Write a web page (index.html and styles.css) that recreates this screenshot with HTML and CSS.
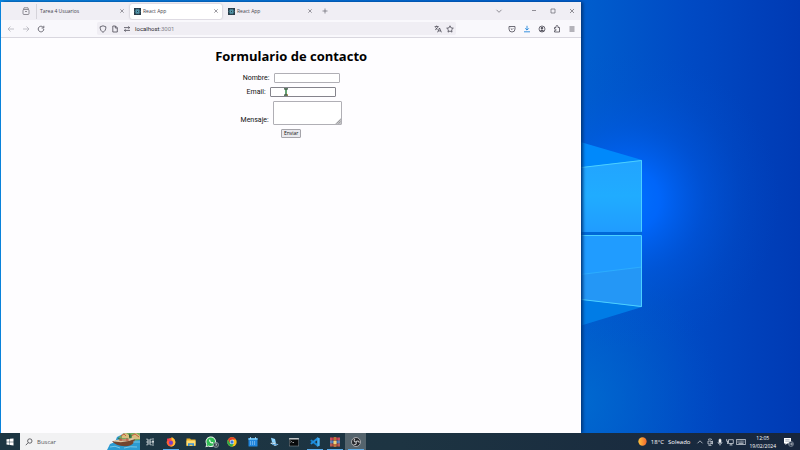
FILE: index.html
```html
<!DOCTYPE html>
<html lang="es">
<head>
<meta charset="utf-8">
<meta name="viewport" content="width=device-width, initial-scale=1">
<title>React App</title>
<link rel="stylesheet" href="styles.css">
</head>
<body>
<div class="desktop">
  <svg class="wallpaper" viewBox="0 0 800 450" preserveAspectRatio="none" aria-hidden="true">
    <defs>
      <linearGradient id="base" x1="0" x2="1" y1="0" y2="0">
        <stop offset="0" stop-color="#0a86e0"/><stop offset=".72" stop-color="#005fce"/><stop offset=".86" stop-color="#004ac4"/><stop offset="1" stop-color="#003ab4"/>
      </linearGradient>
      <radialGradient id="glow" cx="630" cy="200" r="150" gradientUnits="userSpaceOnUse">
        <stop offset="0" stop-color="#0070ff"/><stop offset=".2" stop-color="#0068ff" stop-opacity=".9"/><stop offset=".5" stop-color="#005ae6" stop-opacity=".45"/><stop offset=".75" stop-color="#0055d8" stop-opacity=".15"/><stop offset="1" stop-color="#0050d0" stop-opacity="0"/>
      </radialGradient>
      <radialGradient id="floor" cx="580" cy="400" r="140" gradientUnits="userSpaceOnUse">
        <stop offset="0" stop-color="#006cd0" stop-opacity=".8"/><stop offset="1" stop-color="#0058c8" stop-opacity="0"/>
      </radialGradient>
      <linearGradient id="pane" x1="0" x2="0" y1="0" y2="1">
        <stop offset="0" stop-color="#22a4ff"/><stop offset=".5" stop-color="#20acff"/><stop offset="1" stop-color="#209cff"/>
      </linearGradient>
    </defs>
    <rect width="800" height="450" fill="url(#base)"/>
    <rect width="800" height="450" fill="url(#floor)"/>
    <rect width="800" height="450" fill="url(#glow)"/>
    <path d="M560 136 642 160 560 171z" fill="#0089fb"/>
    <path d="M560 297 642 307 560 332z" fill="#007ce6"/>
    <path d="M560 170 642 160V232H560z" fill="url(#pane)"/>
    <path d="M560 235H642V307L560 297z" fill="#209cff"/>
    <path d="M560 277 642 267V307L560 297z" fill="#2497f6"/>
    <path d="M560 277 642 267" stroke="#31b5ff" stroke-width=".7"/>
    <path d="M560 232H642V235H560z" fill="#0068d8"/>
    <path d="M560 170 641.5 160.5V231.5M641.5 235.500V306.500L560 297M560 235.500H641" fill="none" stroke="#4bd0ff"/>
  </svg>

  <main class="window">
    <div class="tabbar">
      <button class="view icon-btn" aria-label="Firefox View"><svg viewBox="0 0 8 8"><rect x="1" y="2.500" width="6" height="5" rx="1"/><path d="M1.500 2.500 2 .8H6L6.500 2.500M3 4.500H5"/></svg></button>
      <div class="tab first"><span class="title">Tarea 4 Usuarios</span><button class="close" aria-label="Cerrar pestaña"><svg viewBox="0 0 4 4"><path d="M.3.3 3.700 3.700M3.700.3.3 3.700"/></svg></button></div>
      <div class="tab active"><svg class="favicon" viewBox="0 0 7 7"><rect width="7" height="7"/><ellipse cx="3.500" cy="3.500" rx="2.600" ry="1"/><ellipse cx="3.500" cy="3.500" rx="2.600" ry="1" transform="rotate(60 3.5 3.5)"/><ellipse cx="3.500" cy="3.500" rx="2.600" ry="1" transform="rotate(120 3.5 3.5)"/></svg><span class="title">React App</span><button class="close" aria-label="Cerrar pestaña"><svg viewBox="0 0 4 4"><path d="M.3.3 3.700 3.700M3.700.3.3 3.700"/></svg></button></div>
      <div class="tab"><svg class="favicon" viewBox="0 0 7 7"><rect width="7" height="7"/><ellipse cx="3.500" cy="3.500" rx="2.600" ry="1"/><ellipse cx="3.500" cy="3.500" rx="2.600" ry="1" transform="rotate(60 3.5 3.5)"/><ellipse cx="3.500" cy="3.500" rx="2.600" ry="1" transform="rotate(120 3.5 3.5)"/></svg><span class="title">React App</span><button class="close" aria-label="Cerrar pestaña"><svg viewBox="0 0 4 4"><path d="M.3.3 3.700 3.700M3.700.3.3 3.700"/></svg></button></div>
      <button class="icon-btn" aria-label="Nueva pestaña"><svg viewBox="0 0 8 8"><path d="M4 1.500V6.500M1.500 4H6.500"/></svg></button>
      <div class="window-buttons">
        <button class="icon-btn list" aria-label="Listar pestañas"><svg viewBox="0 0 8 8"><path d="M1.500 2.800 4 5.300 6.500 2.800"/></svg></button>
        <button class="icon-btn" aria-label="Minimizar"><svg viewBox="0 0 8 8"><path d="M2 3.500H6"/></svg></button>
        <button class="icon-btn" aria-label="Maximizar"><svg viewBox="0 0 8 8"><path d="M2 2H6V6H2z"/></svg></button>
        <button class="icon-btn" aria-label="Cerrar"><svg viewBox="0 0 8 8"><path d="M2 2 6 6M6 2 2 6"/></svg></button>
      </div>
    </div>

    <div class="toolbar">
      <div class="nav">
        <button class="icon-btn" aria-label="Atrás" disabled><svg viewBox="0 0 8 8"><path d="M7 4H1M3.500 1.500 1 4 3.500 6.500"/></svg></button>
        <button class="icon-btn" aria-label="Adelante" disabled><svg viewBox="0 0 8 8"><path d="M1 4H7M4.500 1.500 7 4 4.500 6.500"/></svg></button>
        <button class="icon-btn" aria-label="Recargar"><svg viewBox="0 0 8 8"><path d="M6.800 4A2.800 2.800 0 1 1 5.800 1.900M6.800.8V3H4.600"/></svg></button>
      </div>
      <div class="urlbar">
        <svg viewBox="0 0 8 8"><path d="M4 .8 6.900 1.800C6.900 4.800 5.800 6.300 4 7.300 2.200 6.300 1.100 4.800 1.100 1.800z"/></svg>
        <svg viewBox="0 0 8 8"><path d="M1.800 1H4.500L6.300 2.800V7H1.800zM4.300 1V3H6.300"/></svg>
        <svg viewBox="0 0 8 8"><path d="M1 2.600H6.500M5.300 1.400 6.700 2.600 5.300 3.800M7 5.400H1.500M2.700 4.200 1.300 5.400 2.700 6.600"/></svg>
        <span class="url">localhost<span class="port">:3001</span></span>
        <svg viewBox="0 0 8 8"><path d="M.6 1.600H4.600M2.600.6V1.600M1.200 4.800C2.800 4 3.600 3 3.800 1.600M1.300 2.500 3.500 4.500M3.600 7.300 5.500 3 7.400 7.300M4.200 5.900H6.800"/></svg>
        <svg viewBox="0 0 8 8"><path d="M4 .8 5 2.900 7.300 3.200 5.600 4.800 6 7.100 4 6 2 7.100 2.400 4.800.7 3.200 3 2.900z"/></svg>
      </div>
      <div class="actions">
        <button class="icon-btn" aria-label="Pocket"><svg viewBox="0 0 8 8"><path d="M1 1.500H7V4A3 3 0 0 1 1 4zM2.700 3.300 4 4.600 5.300 3.300"/></svg></button>
        <button class="icon-btn download" aria-label="Descargas"><svg viewBox="0 0 8 8"><path d="M4 .8V5M2.200 3.300 4 5.100 5.800 3.300M1 6.800H7"/></svg></button>
        <button class="icon-btn" aria-label="Cuenta"><svg viewBox="0 0 8 8"><circle cx="4" cy="4" r="3"/><path d="M4 2.300A.9.9 0 1 1 3.900 2.300M2.300 6Q4 4.300 5.700 6z" fill="#4b4a55"/></svg></button>
        <button class="icon-btn" aria-label="Extensiones"><svg viewBox="0 0 8 8"><path d="M1.500 2.500H3V1.500A1 1 0 0 1 5 1.500V2.500H6.500V7H1.500V5.700H2.300A.8.800 0 0 0 2.300 4.100H1.500z"/></svg></button>
        <button class="icon-btn" aria-label="Menú"><svg viewBox="0 0 8 8"><path d="M1.500 2H6.500M1.500 4H6.500M1.500 6H6.500"/></svg></button>
      </div>
    </div>

    <form class="page">
      <h1>Formulario de contacto</h1>
      <div class="row"><label for="nombre">Nombre:</label><input id="nombre" type="text"></div>
      <div class="row"><label for="email">Email:</label><span class="field"><input class="hovered" id="email" type="email"><svg class="cursor" viewBox="0 0 6 8"><path d="M1 .8H5M3 .8V7.200M1 7.200H5" fill="none" stroke="#284b32" stroke-width="1.300"/><path d="M3 2V5.500" stroke="#58c36b"/><path d="M4 6.800H5" stroke="#e0a040"/></svg></span></div>
      <div class="row message"><label for="mensaje">Mensaje:</label><span class="field"><textarea id="mensaje"></textarea><svg class="grip" viewBox="0 0 6 6"><path d="M6 0V6H0z" fill="#c4c4c6"/><path d="M1.500 5.500 5.500 1.500M3.500 5.500 5.500 3.500" stroke="#858588" stroke-width=".6"/></svg></span></div>
      <button class="send" type="button">Enviar</button>
    </form>
  </main>
</div>

<footer class="taskbar">
  <button class="start" aria-label="Inicio"><svg viewBox="0 0 8 8"><path d="M.5 1.300 3.600.9V3.700H.5zM4 .8 7.500.4V3.700H4zM.5 4.200H3.600V7L.5 6.600zM4 4.200H7.500V7.500L4 7.100z" fill="#fff"/></svg></button>
  <div class="search">
    <svg class="lens" viewBox="0 0 8 8"><circle cx="4.800" cy="3" r="2.200"/><path d="M3.200 4.700.8 7.200"/></svg>
    <input type="text" aria-label="Buscar" placeholder="Buscar">
    <svg class="boat" viewBox="0 0 33 17"><path d="M10 4 14 2 17 0H33V17H0L3 11 8 9z" fill="#2c9bd2"/><path d="M12 4 18 0H33V7L24 8 13 7z" fill="#76a961"/><path d="M15 1 19 0 22 2V5H15zM25 2 29 0 33 3V6H25z" fill="#d9bd7e"/><path d="M14 3 17 1 19 3M24 3 28 1 32 4" fill="none" stroke="#c2603e"/><path d="M22 1 24 3 23 6M11 5 14 7" stroke="#397a4c" stroke-width="1.500"/><path d="M5 8Q15 10 28 6 27 12 21 13 9 14 5 8z" fill="#74452f"/><path d="M6 8Q16 11 28 6L26 5 9 7z" fill="#dfc6a0"/><path d="M12 7H22M14 5V8M20 5V8" stroke="#b05541"/><path d="M3 14Q8 12 13 15M17 15Q23 13 30 14M26 9H33" stroke="#8bd3ec" fill="none" stroke-width=".8"/></svg>
  </div>
  <nav class="apps" aria-label="Aplicaciones">
    <button aria-label="Vista de tareas"><svg viewBox="0 0 10 10"><path d="M2 1.500V3H6V1.500M2 8.500V7H6V8.500M2 4.200H6V5.800H2zM8 1V9" fill="none" stroke="#dbe2e5" stroke-width=".8"/><path d="M7.300 4H8.700V5.500H7.300z" fill="#fff"/></svg></button>
    <button class="open" aria-label="Firefox"><svg viewBox="0 0 10 10"><circle cx="5" cy="5.300" r="4.300" fill="#ff6235"/><path d="M5.500 0C8 1 10 3.500 9.200 6.500 8.500 9 6 9.800 4.200 9.200 8 8.800 8 4 5.500 3z" fill="#ffbd35"/><path d="M.8 3 2 .8 3 2.500 5 2.800 3.200 4.200z" fill="#ff3655"/><circle cx="4.900" cy="5.700" r="2" fill="#7642ca"/></svg></button>
    <button aria-label="Explorador"><svg viewBox="0 0 10 10"><path d="M.5 1.500H4L5 2.500H9.500V9H.5z" fill="#e9ad27"/><path d="M.5 3.500H9.500V8.500H.5z" fill="#ffdc70"/><path d="M2 9V6.200H8V9H6.500V7.700H3.500V9z" fill="#3b91d4"/></svg></button>
    <button class="wide" aria-label="WhatsApp"><svg viewBox="0 0 12 10"><path d="M.4 9.500 1.100 7A4.500 4.500 0 1 1 3 8.800z" fill="#e7f2e9"/><path d="M1.300 8.600 1.900 6.800A3.700 3.700 0 1 1 3.200 8z" fill="#32bd55"/><path d="M3.500 3C3.500 5 5 6.500 7 6.300L7 5.300 6 5 5.500 5.400 4.500 4.200 4.700 3.700 4.300 2.800z" fill="#fff"/><circle cx="9.400" cy="7.500" r="2.200" fill="#33434a" stroke="#b9c4c8" stroke-width=".5"/><path d="M8.700 6.600H10L9.300 8.700" stroke="#fff" stroke-width=".5" fill="none"/></svg></button>
    <button aria-label="Chrome"><svg viewBox="0 0 10 10"><circle cx="5" cy="5" r="4.700" fill="#fbc116"/><path d="M.9 2.600A4.700 4.700 0 0 1 9.100 2.600H5L3 6.200z" fill="#e33b2e"/><path d="M.9 2.600A4.700 4.700 0 0 0 5 9.700L7 6.200 3 6.200z" fill="#2da94f"/><circle cx="5" cy="5" r="2.200" fill="#fff"/><circle cx="5" cy="5" r="1.700" fill="#3579dc"/></svg></button>
    <button aria-label="Calendario"><svg viewBox="0 0 10 10"><rect x=".5" y="1" width="9" height="8.500" rx=".6" fill="#2185dc"/><path d="M.5 1H9.500V3H.5z" fill="#63bbf3"/><path d="M2.500 0V2M7.500 0V2" stroke="#b5dff8" stroke-width=".8"/><path d="M2 5H8M2 7H8" stroke="#a8d6fa" stroke-dasharray="1 1"/></svg></button>
    <button aria-label="Escritorio remoto"><svg viewBox="0 0 10 10"><path d="M2 .8 6 2 7 6.500 3 5.200z" fill="#8ed5ff"/><path d="M1 6 4 5.500 9.500 7.400 6 9z" fill="#d8edf8"/><path d="M3 6.800 6 8 8.500 7.300" stroke="#3891d3" fill="none"/></svg></button>
    <button aria-label="Símbolo del sistema"><svg viewBox="0 0 10 10"><rect x=".2" y="1.200" width="9.600" height="7.800" fill="#080a0c" stroke="#a9afb3" stroke-width=".4"/><path d="M.2 1H9.800V2.500H.2z" fill="#bfc5c8"/><path d="M1.500 3.800 2.500 4.600 1.500 5.400M3.500 5.500H5" stroke="#fff" fill="none" stroke-width=".6"/></svg></button>
    <button class="open" aria-label="Visual Studio Code"><svg viewBox="0 0 10 10"><path d="M.5 3.300 1.500 2.500 7.500 7V9.700L.5 4z" fill="#1683cf"/><path d="M.5 6.700 1.500 7.500 7.500 3V.3L.5 6z" fill="#208ee0"/><path d="M7.200.2 9.700 1.300V8.700L7.200 9.800z" fill="#42aff5"/></svg></button>
    <button class="open" aria-label="WinRAR"><svg viewBox="0 0 10 10"><path d="M0 .5H10V3.500H0z" fill="#bd3548"/><path d="M0 3.500H10V6.500H0z" fill="#3c73b8"/><path d="M0 6.500H10V9.500H0z" fill="#a8473f"/><path d="M3.700 0H6.300V10H3.700z" fill="#b3773b"/><path d="M3.500 4H6.500V7H3.500z" fill="#f0d27c"/><path d="M1 .5V9.500M9 .5V9.500" stroke="#e1a0a0" stroke-width=".5"/></svg></button>
    <button class="open current" aria-label="OBS Studio"><svg viewBox="0 0 10 10"><circle cx="5" cy="5" r="4.500" fill="#242529" stroke="#d5d6d8" stroke-width=".7"/><path d="M5 5C3 5 2.500 3 4 1.800M5 5C6 3.300 8.200 3.800 8.200 5.700M5 5C6 6.700 4.500 8.300 2.600 7.500" fill="none" stroke="#c5c6c8" stroke-width="1.100"/></svg></button>
  </nav>
  <div class="tray">
    <button class="weather"><svg viewBox="0 0 10 10"><defs><linearGradient id="sun"><stop offset="0" stop-color="#ffc23c"/><stop offset="1" stop-color="#f0672f"/></linearGradient></defs><circle cx="5" cy="5" r="4.600" fill="url(#sun)"/></svg><span>18°C</span><span>Soleado</span></button>
    <div class="status">
      <svg viewBox="0 0 8 8"><path d="M1.500 5.300 4 2.800 6.500 5.300"/></svg>
      <svg viewBox="0 0 8 8"><path d="M2 1.500Q4 .2 6 1.500M2 3H5V6H2zM5 4 6.500 3V6L5 5M2.500 7.400H5.500"/></svg>
      <svg viewBox="0 0 8 8"><rect x="3" y="1" width="2" height="3.800" rx="1" fill="#fff"/><path d="M2 4A2 2 0 0 0 6 4M4 6V7.500"/></svg>
      <svg viewBox="0 0 8 8"><path d="M2.500 1.700H7.300V5.500H2.500zM3.500 7H6.500M5 5.500V7M.7 1V3.300H2.500M1.500 3.300V6"/></svg>
      <svg class="keyboard" viewBox="0 0 10 8"><path d="M.4 1.500H9.600V6.500H.4z"/><path d="M1.500 3H8.500M1.500 4.200H8.500" stroke-dasharray=".8 .4"/><path d="M2.500 5.400H7.500"/></svg>
    </div>
    <div class="clock"><time>12:05</time><time>19/02/2024</time></div>
    <button class="notices" aria-label="Notificaciones"><svg viewBox="0 0 11 10"><path d="M1 1H8V6.500H4L2.500 8V6.500H1z" fill="#fff"/><path d="M2.300 2.700H6.700M2.300 4.200H6.700" stroke="#718092" stroke-width=".6"/><circle cx="8" cy="7" r="2.500" fill="#26364c" stroke="#b5bdc7" stroke-width=".5"/><path d="M7 6V8M8.300 6H9.200V8H8.300z" fill="none" stroke="#fff" stroke-width=".4"/></svg></button>
  </div>
</footer>
</body>
</html>
```
FILE: styles.css
```css
* { box-sizing: border-box; }

body {
  margin: 0;
  min-height: 100vh;
  display: flex;
  flex-direction: column;
  font-family: "Open Sans", "Noto Sans", sans-serif;
  font-size: 5px;
  line-height: 8px;
  color: #15141a;
}

button, input, textarea {
  font: inherit;
  color: inherit;
  margin: 0;
  padding: 0;
  border: 0;
  background: none;
}

svg { display: block; flex: none; }

.desktop {
  position: relative;
  flex: 1;
  display: flex;
  padding: 2px 0 0 1px;
}

.wallpaper {
  position: absolute;
  top: 0;
  left: 0;
  width: 100%;
  height: 100vh;
}

.window {
  position: relative;
  width: calc(72.5% + 1px);
  display: flex;
  flex-direction: column;
  background: #fefdff;
  box-shadow: 2px 0 3px #00387c;
}

.tabbar {
  display: flex;
  align-items: center;
  height: 18px;
  background: #f0eef4;
}

.icon-btn {
  display: grid;
  place-items: center;
  width: 15px;
  height: 14px;
}

.icon-btn svg, .urlbar svg {
  width: 8px;
  height: 8px;
  fill: none;
  stroke: #4b4a55;
  stroke-width: .8;
}

.tabbar .icon-btn svg { stroke: #65646d; stroke-width: .7; }
.view { margin-left: 17px; }

.tab {
  display: flex;
  align-items: center;
  gap: 2px;
  width: 92px;
  height: 15px;
  margin: 0 1px;
  padding: 0 4px;
  border-radius: 2px;
  color: #45434d;
}

.tab.first {
  margin-left: 3px;
  padding-left: 3px;
  border-left: 1px solid #d5d3da;
  border-radius: 0;
}

.tab.active {
  background: #fff;
  box-shadow: 0 0 2px #aaa8b2;
}

.title { flex: 1; white-space: nowrap; }

.favicon { width: 7px; height: 7px; fill: none; stroke: #62b7cc; stroke-width: .5; }
.favicon rect { fill: #293b48; stroke: none; }

.close svg { width: 4px; height: 4px; fill: none; stroke: #5c5b64; stroke-width: .6; }

.window-buttons { display: flex; gap: 4px; margin-left: auto; padding-right: 2px; }
.window-buttons .list { margin-right: 16px; }

.toolbar {
  display: flex;
  align-items: center;
  height: 18px;
  padding: 0 2px;
  background: #f9f8fc;
  border-bottom: 1px solid #d9d7df;
}

.nav, .actions { display: flex; }
.nav .icon-btn:disabled svg { stroke: #b3b1ba; }
.download svg { stroke: #0a78d8; }

.urlbar {
  flex: 1;
  display: flex;
  align-items: center;
  gap: 4px;
  height: 13px;
  margin: 0 48px 0 49px;
  padding: 0 2px;
  border-radius: 2px;
  background: #f0eef4;
}

.url { flex: 1; color: #2b2a33; font-family: Roboto, "Open Sans", sans-serif; font-size: 6px; }
.port { color: #85848c; }

.page {
  display: flex;
  flex-direction: column;
  align-items: center;
  gap: 4px;
  padding-top: 9px;
  font-size: 7px;
  line-height: 10px;
  color: #111;
}

.page label { font-family: Roboto, "Open Sans", sans-serif; }

h1 {
  margin: 0 0 4px;
  font-size: 13px;
  line-height: 18px;
  color: #000;
}

.row { display: flex; align-items: center; gap: 4px; }
.message { align-items: flex-end; }

.field { position: relative; display: block; }

.page input, textarea {
  display: block;
  width: 66px;
  height: 10px;
  padding: 0 2px;
  border: 1px solid #b0afb5;
  border-radius: 1px;
  background: #fff;
}

.page input.hovered { border-color: #85848c; }

.page textarea { width: 69px; height: 24px; resize: none; }

.grip { position: absolute; right: 1px; bottom: 1px; width: 6px; height: 6px; }
.cursor { position: absolute; left: 13px; top: 1px; width: 6px; height: 8px; }

.send {
  width: 20px;
  height: 9px;
  border: 1px solid #a5a4aa;
  border-radius: 1px;
  background: #e9e9ed;
  font-size: 5px;
  line-height: 7px;
}

.taskbar {
  position: relative;
  display: flex;
  height: 17px;
  background: linear-gradient(90deg, #1c3643, #1d3442 50%, #17263d);
  color: #fff;
}

.start { display: grid; place-items: center; width: 20px; }
.start svg { width: 8px; height: 8px; }

.search {
  display: flex;
  align-items: center;
  gap: 4px;
  width: 120px;
  padding-left: 5px;
  background: #f2f2f3;
}

.search input { flex: 1; min-width: 0; color: #444; font-size: 6px; outline: 0; }
.search input::placeholder { color: #55555a; opacity: 1; }
.lens { width: 8px; height: 8px; fill: none; stroke: #45454a; stroke-width: .8; }
.boat { width: 33px; height: 17px; }

.apps { display: flex; width: 226px; }
.apps button { flex: 1; display: grid; place-items: center; }
.apps svg { width: 10px; height: 10px; }
.apps .wide svg { width: 14px; height: 12px; }
.apps .open { background: linear-gradient(#5badec, #5badec) bottom / 16px 1px no-repeat; }
.apps .current { background-color: #55646d; }

.tray { display: flex; align-items: center; margin-left: auto; }

.weather { display: flex; align-items: center; gap: 4px; margin-right: 6px; font-size: 6px; }
.weather svg { width: 9px; height: 9px; }

.status { display: flex; gap: 2px; }
.status svg { width: 8px; height: 8px; fill: none; stroke: #e3e7ec; stroke-width: .7; }
.status .keyboard { width: 10px; }

.clock {
  display: flex;
  flex-direction: column;
  align-items: center;
  margin-left: 3px;
}

.notices { margin: 0 6px 0 7px; }
.notices svg { width: 11px; height: 10px; }
```
